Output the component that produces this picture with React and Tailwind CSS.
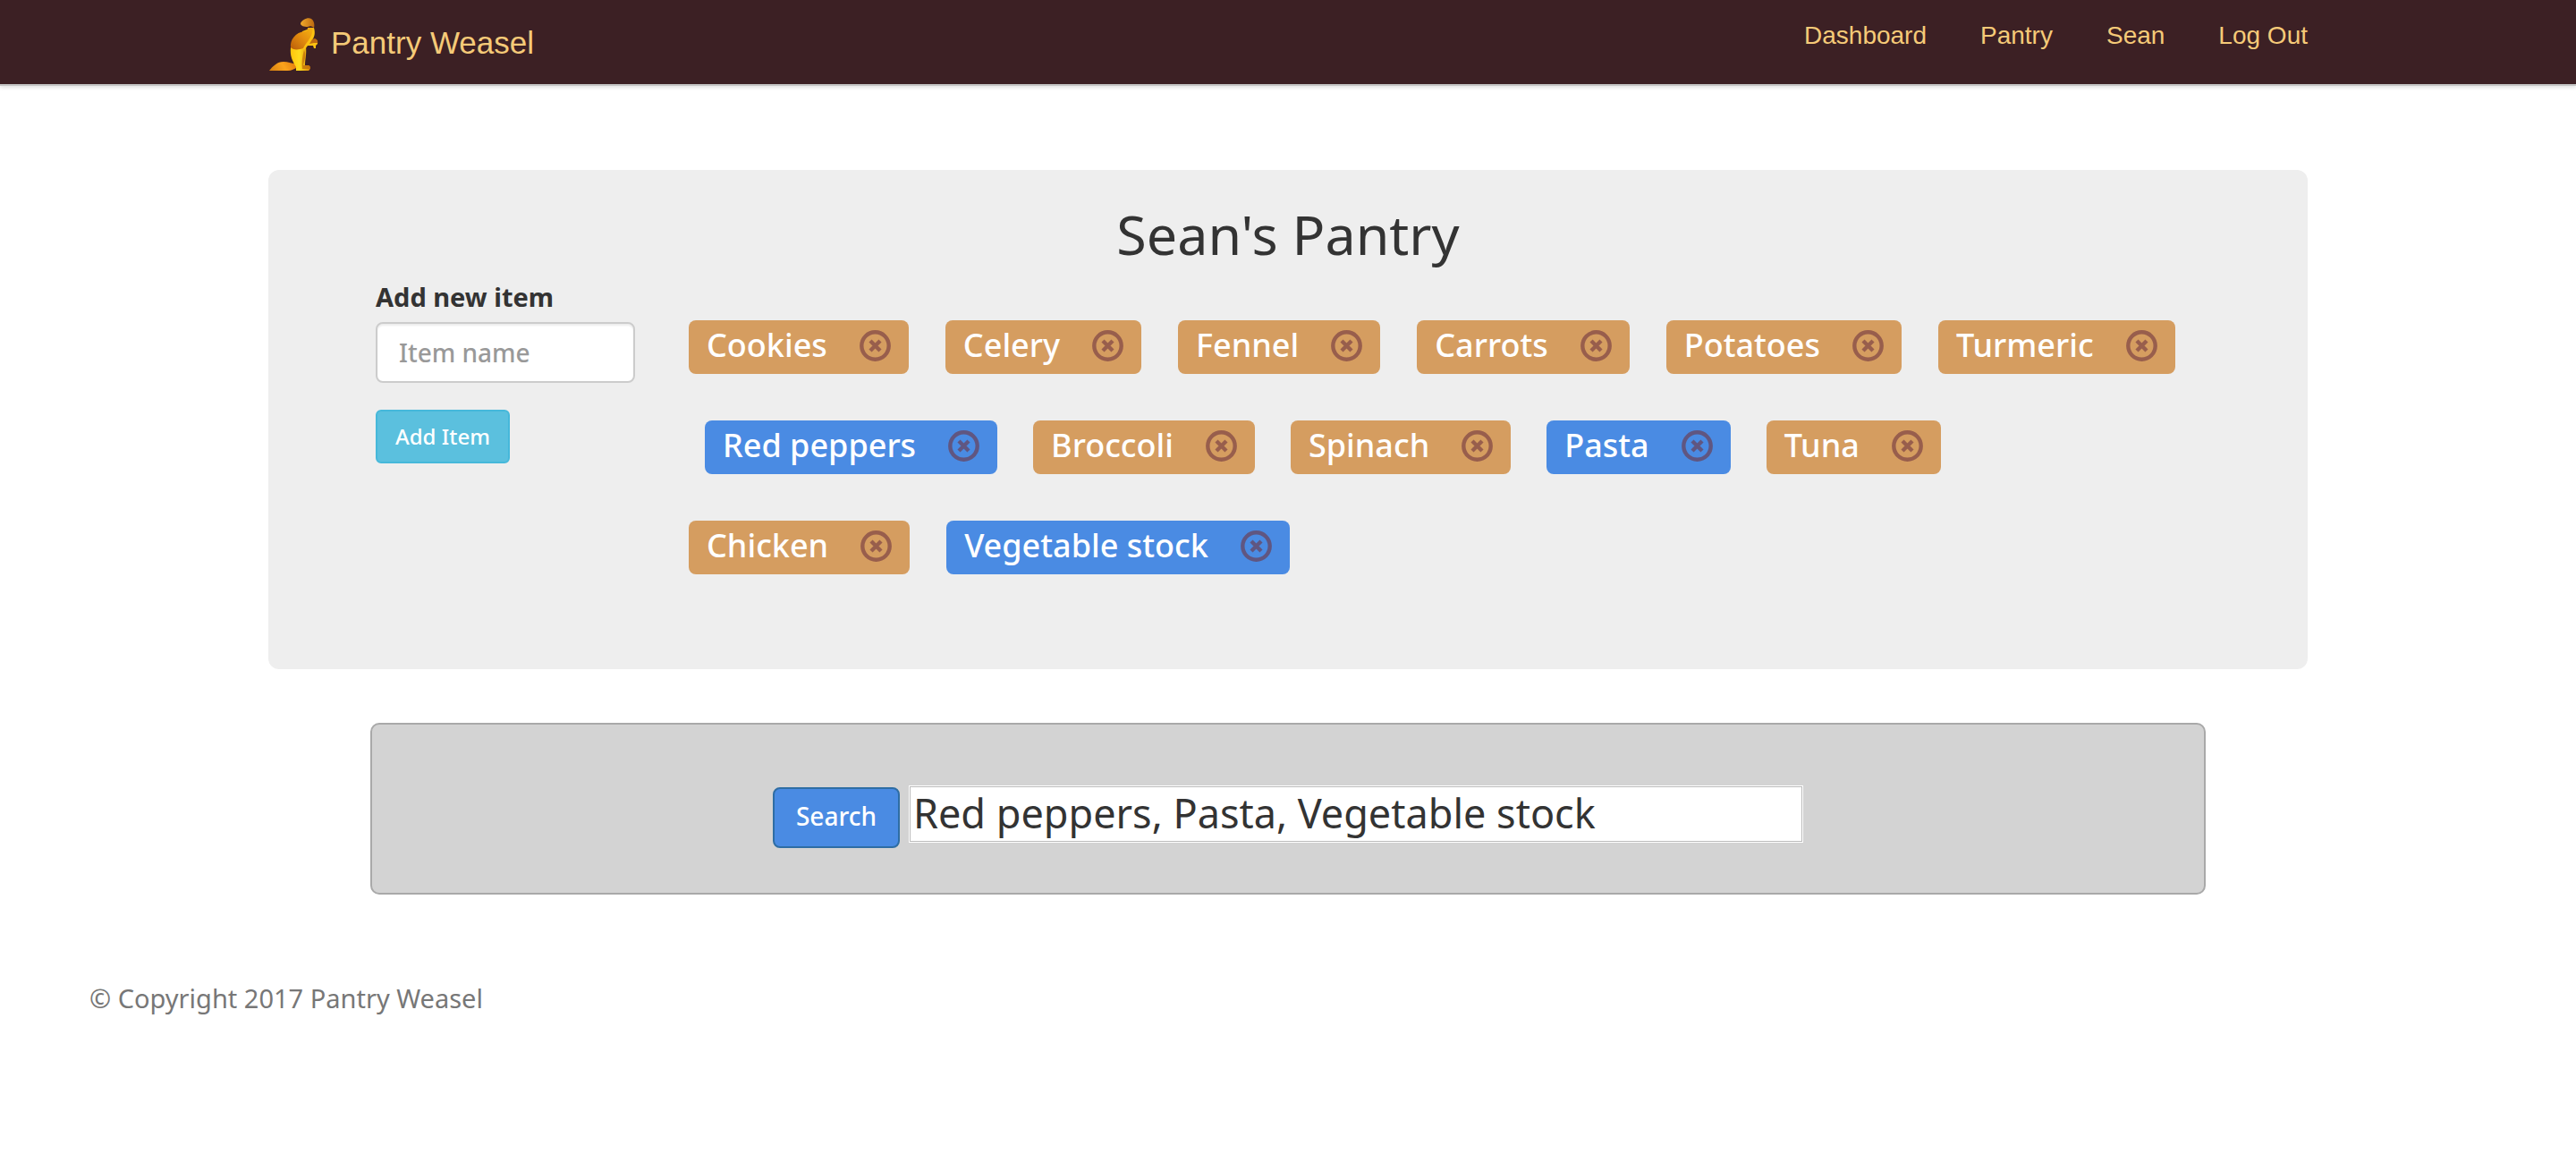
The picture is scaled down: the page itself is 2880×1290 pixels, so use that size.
const rows = [
  {
    shifted: false,
    items: [
      { name: "Cookies" },
      { name: "Celery" },
      { name: "Fennel" },
      { name: "Carrots" },
      { name: "Potatoes" },
      { name: "Turmeric" },
    ],
  },
  {
    shifted: true,
    items: [
      { name: "Red peppers", selected: true },
      { name: "Broccoli" },
      { name: "Spinach" },
      { name: "Pasta", selected: true },
      { name: "Tuna" },
    ],
  },
  {
    shifted: false,
    items: [{ name: "Chicken" }, { name: "Vegetable stock", selected: true }],
  },
];

const links = ["Dashboard", "Pantry", "Sean", "Log Out"];

function Weasel() {
  return (
    <svg className="h-[60px] w-[56px]" viewBox="0 0 56 60" aria-hidden="true">
      <defs>
        <linearGradient id="tail" x1="0" x2="1" y1="0.6" y2="0.4">
          <stop offset="0" stopColor="#d98412" />
          <stop offset="0.5" stopColor="#fba31c" />
          <stop offset="1" stopColor="#e07a0c" />
        </linearGradient>
        <linearGradient id="leg" x1="0" x2="1">
          <stop offset="0" stopColor="#ffc40c" />
          <stop offset="0.45" stopColor="#ffdc1e" />
          <stop offset="1" stopColor="#d98608" />
        </linearGradient>
        <linearGradient id="back" x1="0" x2="1" y1="1" y2="0">
          <stop offset="0" stopColor="#b95c0a" />
          <stop offset="0.55" stopColor="#e58f0f" />
          <stop offset="1" stopColor="#f6b512" />
        </linearGradient>
        <linearGradient id="head" x1="0" x2="1">
          <stop offset="0" stopColor="#f0aa2c" />
          <stop offset="1" stopColor="#bd6a10" />
        </linearGradient>
      </defs>
      <path d="M1 59 C5 54 10 49 17 49 C23 49 27 52 32 51 L33 55 C29 57 26 59 22 59 Z" fill="url(#tail)" />
      <path d="M25 33 C24 43 27 48 31 55 L31 59 L45 59 C48 57 47 54 45 53 L41 53 C41 46 43 41 42 32 Z" fill="url(#leg)" />
      <path d="M40 36 C43 42 40 48 39 53 L45 53 C47 54 48 56 46 57 L38 57 C37 50 38 43 40 36 Z" fill="#c06d0a" opacity="0.75" />
      <path d="M51 11 C53 18 51 22 49 25 C52 22 56 25 55 29 L53 31 L53 34 L51 34 L50 31 L44 31 L41 35 L36 35 L38 15 L46 12 Z" fill="#fcc111" />
      <path d="M41 15 C30 16 24 25 25 33 C27 36 34 36 39 34 C42 28 47 24 49 17 L50 11 L44 11 C44 13 43 15 41 15 Z" fill="url(#back)" />
      <path d="M49 24 C53 22 56 25 55 28 L51 28 L46 29 Z" fill="#bd6a10" />
      <path d="M36 6 C38 2 44 -1 48 1 C51 3 52 7 51 11 C48 9 47 9 44 10 C40 10 36 9 36 6 Z" fill="url(#head)" />
    </svg>
  );
}

function Tag({ name, selected }) {
  return (
    <li
      className={
        selected
          ? "flex h-[60px] items-center gap-9 rounded-lg bg-[#4a8be3] px-5"
          : "flex h-[60px] items-center gap-9 rounded-lg bg-[#d59d60] px-5"
      }
    >
      <span className="pb-1 text-[36px] font-medium leading-[56px] text-white">{name}</span>
      <button type="button" aria-label={`Remove ${name}`} className="mb-1 text-[#6f3440]/60">
        <svg className="size-[35px]" viewBox="0 0 35 35" fill="none" stroke="currentColor" aria-hidden="true">
          <path
            d="M17.500 2.300a15.200 15.200 0 1 0 0 30.400a15.200 15.200 0 1 0 0-30.400M12 12L23 23M23 12L12 23"
            strokeWidth="4.400"
          />
        </svg>
      </button>
    </li>
  );
}

export default function App() {
  return (
    <div className="font-['Noto_Sans','Open_Sans',sans-serif] text-[28px] leading-10 text-[#333]">
      <header className="border-b-2 border-[#c4c4c4] bg-[#3c2024] shadow-[0_2px_4px_rgba(0,0,0,0.12)]">
        <div className="mx-auto flex h-[94px] max-w-[2280px] items-start justify-between font-['Liberation_Sans',Arial,sans-serif] text-[#f5ca78]">
          <a href="#home" className="flex items-center gap-3.5 pt-5">
            <Weasel />
            <span className="pb-1 text-[35px]">Pantry Weasel</span>
          </a>
          <nav className="flex gap-[60px] pt-5">
            {links.map((label) => (
              <a key={label} href={`#${label}`}>
                {label}
              </a>
            ))}
          </nav>
        </div>
      </header>

      <main>
        <section className="mx-auto mt-[94px] max-w-[2280px] rounded-xl bg-[#eee] px-[120px] pb-[106px] pt-[34px]">
          <h1 className="text-center text-[61px] leading-[76px]">Sean's Pantry</h1>
          <div className="flex gap-[60px] pt-3">
            <form className="flex w-[290px] flex-col items-start" onSubmit={(e) => e.preventDefault()}>
              <label htmlFor="item" className="pb-2 text-[29px] font-bold leading-10">
                Add new item
              </label>
              <input
                id="item"
                placeholder="Item name"
                className="h-[68px] w-full rounded-lg border-2 border-[#ccc] bg-white px-6 font-medium shadow-[inset_0_2px_2px_rgba(0,0,0,0.075)] placeholder:text-[#999]"
              />
              <button
                type="submit"
                className="mt-[30px] h-[60px] rounded-md border-2 border-[#46b8da] bg-[#5bc0de] px-5 text-2xl font-medium text-white"
              >
                Add Item
              </button>
            </form>
            <div className="flex flex-col gap-[52px] pt-[46px]">
              {rows.map((row, i) => (
                <ul key={i} className={row.shifted ? "flex gap-10 pl-[18px]" : "flex gap-[41px]"}>
                  {row.items.map((item) => (
                    <Tag key={item.name} {...item} />
                  ))}
                </ul>
              ))}
            </div>
          </div>
        </section>

        <form
          className="mx-auto mt-[60px] flex h-[192px] max-w-[2052px] items-start justify-center gap-2.5 rounded-[10px] border-2 border-[#a9a9a9] bg-[#d3d3d3] pt-[68px]"
          onSubmit={(e) => e.preventDefault()}
        >
          <button
            type="submit"
            className="mt-0.5 h-[68px] w-[142px] rounded-lg border-2 border-[#2e6da4] bg-[#4a8be3] pb-1 font-medium text-white"
          >
            Search
          </button>
          <input
            aria-label="Ingredients"
            defaultValue="Red peppers, Pasta, Vegetable stock"
            className="h-16 w-[1000px] border border-white bg-white px-1 pb-1 text-[45px] leading-none shadow-[inset_0_0_0_1px_#bbb]"
          />
        </form>
      </main>

      <footer className="px-[100px] pt-24 text-[29px] text-[#777]">© Copyright 2017 Pantry Weasel</footer>
    </div>
  );
}
